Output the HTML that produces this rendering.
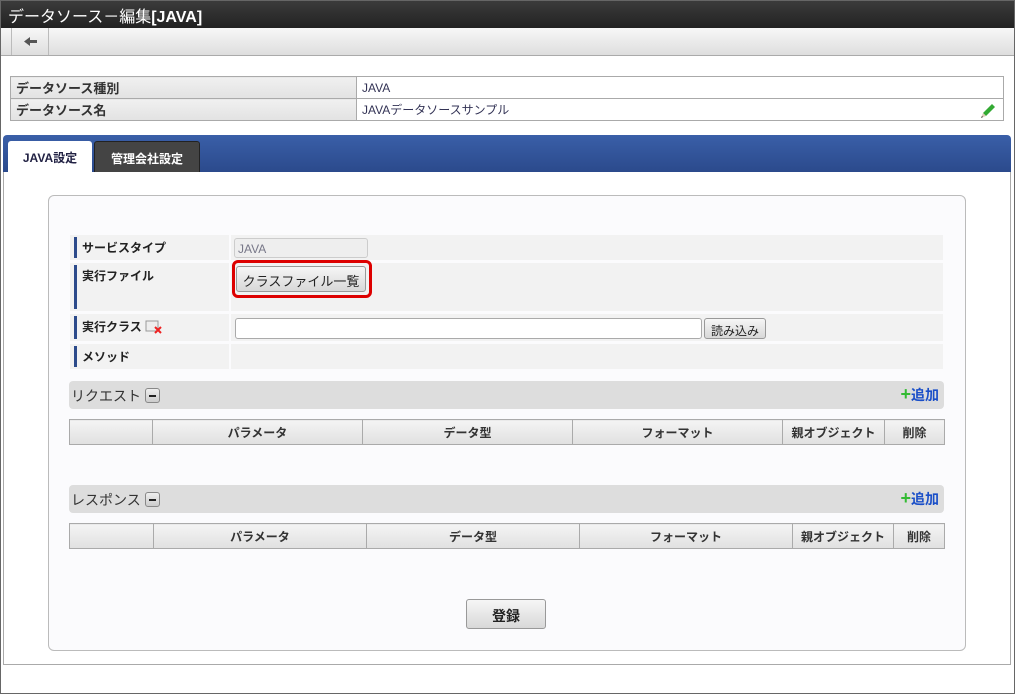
<!DOCTYPE html>
<html><head><meta charset="utf-8"><style>
*{box-sizing:border-box;margin:0;padding:0}
body{width:1015px;height:694px;position:relative;background:#fff;font-family:"Liberation Sans","Noto Sans CJK JP",sans-serif;font-size:12px;color:#222;overflow:hidden}
.a{position:absolute}
.frame{left:0;top:0;width:1015px;height:694px;border:1px solid #666;}
.title{left:0;top:0;width:1015px;height:28px;background:linear-gradient(#3c3c3c,#222);color:#fff;font-size:16px;padding:3px 0 0 8px;letter-spacing:0}
.tool{left:1px;top:28px;width:1013px;height:28px;background:linear-gradient(#f7f7f7,#dedede);border-bottom:1px solid #aaa}
.back{left:11px;top:28px;width:38px;height:27px;border-left:1px solid #bbb;border-right:1px solid #bbb}
table.info{position:absolute;left:10px;top:76px;width:994px;border-collapse:collapse}
table.info td{border:1px solid #aaa;height:22px;padding:0 5px;font-size:12px}
table.info td.l{width:346px;background:linear-gradient(#f0f0f0,#e2e2e2);font-weight:bold;font-size:13px;color:#333}
table.info td.v{color:#335}
.tabbar{left:3px;top:135px;width:1008px;height:37px;background:linear-gradient(#3a5fa8,#2b4a8c);border-radius:4px 4px 0 0}
.tab{top:141px;height:31px;font-weight:bold;font-size:12px;padding-top:8px;text-align:center;border-radius:3px 3px 0 0}
.content{left:3px;top:172px;width:1008px;height:493px;border:1px solid #aaa;border-top:none}
.panel{left:48px;top:195px;width:918px;height:456px;border:1px solid #bbb;border-radius:6px;background:#fbfbfd}
.lab{left:70px;width:159px;background:#f2f2f2;font-weight:bold;padding:4px 0 0 12px;font-size:12px}
.lab:before{content:"";position:absolute;left:4px;top:2px;bottom:2px;width:3px;background:#2c4a8a}
.val{left:231px;width:712px;background:#f2f2f2}
.sec{left:69px;width:875px;height:28px;background:#ddd;border-radius:4px;font-size:14px;padding:5px 0 0 2px;color:#333}
.minus{display:inline-block;width:15px;height:15px;border:1px solid #888;border-radius:3px;background:linear-gradient(#eee,#ccc);vertical-align:-2px;margin-left:4px;position:relative}
.minus:after{content:"";position:absolute;left:3px;top:6px;width:7px;height:2px;background:#222}
.add{position:absolute;right:5px;top:4px;color:#1a4fc8;font-weight:bold;font-size:14px}
.add b{color:#3b3;font-size:18px;line-height:14px}
table.g{position:absolute;left:69px;width:876px;border-collapse:collapse}
table.g td{border:1px solid #aaa;height:25px;background:linear-gradient(#f4f4f4,#e0e0e0);text-align:center;font-weight:bold;font-size:12px;color:#333}
.btn{border:1px solid #999;border-radius:3px;background:linear-gradient(#f6f6f6,#d8d8d8);text-align:center}
</style></head><body>
<div class="a title">データソース－編集<b>[JAVA]</b></div>
<div class="a tool"></div>
<div class="a back"><svg width="38" height="27"><path d="M12 13.5 L18 9 L18 12 L25 12 L25 15 L18 15 L18 18 Z" fill="#555"/></svg></div>
<table class="info"><tr><td class="l">データソース種別</td><td class="v">JAVA</td></tr><tr><td class="l">データソース名</td><td class="v">JAVAデータソースサンプル</td></tr></table>
<svg class="a" style="left:980px;top:101px" width="18" height="18"><path d="M3 12 L12 3 L15 6 L6 15 Z" fill="#3a3"/><path d="M3 12 L6 15 L1 17 Z" fill="#dcb"/><path d="M1 17 L2 15 L3 16Z" fill="#333"/></svg>
<div class="a tabbar"></div>
<div class="a tab" style="left:8px;width:84px;background:#fff;color:#224">JAVA設定</div>
<div class="a tab" style="left:94px;width:106px;background:#444;color:#fff;border:1px solid #222;border-bottom:none">管理会社設定</div>
<div class="a content"></div>
<div class="a panel"></div>
<div class="a lab" style="top:235px;height:25px">サービスタイプ</div>
<div class="a val" style="top:235px;height:25px"></div>
<div class="a" style="left:234px;top:238px;width:134px;height:20px;border:1px solid #ccc;border-radius:3px;background:#eee;color:#778;padding:3px 3px;font-size:12px">JAVA</div>
<div class="a lab" style="top:263px;height:48px">実行ファイル</div>
<div class="a val" style="top:263px;height:48px"></div>
<div class="a" style="left:232px;top:260px;width:140px;height:38px;border:3px solid #d00;border-radius:6px"></div>
<div class="a btn" style="left:236px;top:266px;width:130px;height:26px;font-size:13px;padding-top:4px">クラスファイル一覧</div>
<div class="a lab" style="top:314px;height:27px">実行クラス <svg width="18" height="14" style="vertical-align:-3px"><rect x="1" y="1" width="12" height="10" fill="#eee" stroke="#999"/><path d="M10 7 L16 13 M16 7 L10 13" stroke="#e22" stroke-width="2"/></svg></div>
<div class="a val" style="top:314px;height:27px"></div>
<div class="a" style="left:235px;top:318px;width:467px;height:21px;border:1px solid #aaa;border-radius:3px;background:#fff"></div>
<div class="a btn" style="left:704px;top:318px;width:62px;height:21px;font-size:12px;padding-top:3px;font-weight:normal">読み込み</div>
<div class="a lab" style="top:344px;height:25px">メソッド</div>
<div class="a val" style="top:344px;height:25px"></div>
<div class="a sec" style="top:381px">リクエスト<span class="minus"></span><span class="add"><b>+</b>追加</span></div>
<table class="g" style="top:419px"><tr><td style="width:83px"></td><td style="width:210px">パラメータ</td><td style="width:210px">データ型</td><td style="width:210px">フォーマット</td><td style="width:102px">親オブジェクト</td><td>削除</td></tr></table>
<div class="a sec" style="top:485px">レスポンス<span class="minus"></span><span class="add"><b>+</b>追加</span></div>
<table class="g" style="top:523px"><tr><td style="width:84px"></td><td style="width:213px">パラメータ</td><td style="width:213px">データ型</td><td style="width:213px">フォーマット</td><td style="width:101px">親オブジェクト</td><td>削除</td></tr></table>
<div class="a btn" style="left:466px;top:599px;width:80px;height:30px;font-size:14px;font-weight:bold;padding-top:6px">登録</div>
<div class="a frame"></div>
</body></html>
